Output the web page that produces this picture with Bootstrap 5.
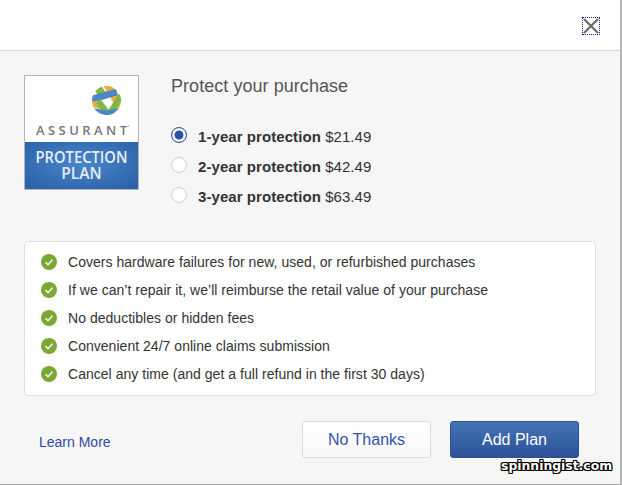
<!DOCTYPE html>
<html lang="en">
  <head>
    <meta charset="utf-8" />
    <meta name="viewport" content="width=device-width, initial-scale=1" />
    <title>Protect your purchase</title>
    <link href="https://cdn.jsdelivr.net/npm/bootstrap@5.3.3/dist/css/bootstrap.min.css" rel="stylesheet" />
    <style>
      html, body { height: 100%; overflow: hidden; }
      body {
        font-family: "Liberation Sans", Arial, sans-serif;
        background: #f6f6f6;
        color: #333;
      }
      .dialog-shell {
        width: 622px;
        height: 485px;
        border-right: 2px solid #b5b5b5;
        border-bottom: 1px solid #a8a8a8;
        position: relative;
      }
      .dialog-top {
        height: 51px;
        background: #fff;
        border-bottom: 1px solid #d9d9d9;
        padding: 17px 20px 0 0;
      }
      .close-x {
        width: 18px;
        height: 18px;
        padding: 0;
        background: none;
        border: 1px dotted #0a1fb0;
        line-height: 0;
      }
      .dialog-main { padding: 24px 24px 0 24px; }
      .plan-logo {
        width: 115px;
        height: 115px;
        border: 1px solid #b4b4b4;
        flex: none;
        background: #fff;
      }
      .plan-col { margin-left: 32px; }
      .plan-title {
        font-size: 18px;
        line-height: 22px;
        color: #555;
        font-weight: 400;
        letter-spacing: .05px;
        margin: 0 0 25px;
      }
      .plan-row {
        height: 30px;
        font-size: 15px;
        letter-spacing: .07px;
        color: #333;
        margin: 0;
        cursor: pointer;
      }
      .plan-row strong { font-weight: 700; }
      .plan-radio {
        width: 16px;
        height: 16px;
        border-radius: 50%;
        border: 1px solid #cfcfcf;
        background: #fff;
        margin-right: 11px;
        margin-top: -4px;
        flex: none;
      }
      .plan-radio.on {
        border-color: #2d50a5;
        box-shadow: inset 0 0 0 2.5px #fff, inset 0 0 0 8px #2d50a5;
      }
      .benefit-box {
        margin-top: 29px;
        width: 572px;
        height: 155px;
        background: #fff;
        border: 1px solid #e0e0e0;
        border-radius: 4px;
        padding: 6px 0 0 16px;
      }
      .benefit-row {
        height: 28px;
        font-size: 14px;
        letter-spacing: .03px;
        color: #333;
      }
      .benefit-row svg { margin-right: 11px; flex: none; }
      .dialog-foot {
        margin-top: 25px;
        padding: 0 17px 0 15px;
        width: 572px;
      }
      .learn-link {
        color: #2d4aa0;
        font-size: 14px;
        text-decoration: none;
        padding-top: 5px;
      }
      .foot-btn {
        width: 129px;
        height: 37px;
        font-size: 16px;
        padding: 0;
        border-radius: 3px;
      }
      .btn-nope {
        background: linear-gradient(#fff, #f8f8f8);
        border: 1px solid #dcdcdc;
        color: #3353b0;
        margin-right: 19px;
      }
      .btn-add {
        background: linear-gradient(#4475b5, #2c5198);
        border: 1px solid #2c5198;
        color: #fff;
      }
      .watermark {
        position: absolute;
        left: 501px;
        top: 458px;
        font-family: "DejaVu Sans", sans-serif;
        font-weight: 700;
        font-size: 12.4px;
        line-height: 16px;
        color: #fff;
        text-shadow: 1px 0 #000, -1px 0 #000, 0 1px #000, 0 -1px #000, 1px 1px #000, -1px -1px #000, 1px -1px #000, -1px 1px #000;
      }
    </style>
  </head>
  <body>
    <div class="dialog-shell">
      <div class="dialog-top d-flex justify-content-end align-items-start">
        <button class="close-x" aria-label="Close">
          <svg width="16" height="16" viewBox="0 0 16 16"><path d="M1 1 15 15M15 1 1 15" stroke="#666" stroke-width="2" fill="none" /></svg>
        </button>
      </div>

      <div class="dialog-main">
        <div class="d-flex">
          <div class="plan-logo">
            <svg width="113" height="113" viewBox="0 0 113 113">
              <defs>
                <radialGradient id="planBlue" cx="0.5" cy="0.45" r="0.65">
                  <stop offset="0" stop-color="#4b86c9" />
                  <stop offset="1" stop-color="#2c63ab" />
                </radialGradient>
                <clipPath id="ballClip"><circle cx="81.5" cy="24.5" r="14.5" /></clipPath>
              </defs>
              <g clip-path="url(#ballClip)" fill="none">
                <!-- woven bands of the ball -->
                <path d="M70 8 80 22" stroke="#7fb648" stroke-width="8" />
                <path d="M82 8 96 32" stroke="#efab38" stroke-width="8" />
                <path d="M64 24 92 16" stroke="#4a86c8" stroke-width="7" />
                <path d="M65 27 78 31" stroke="#efab38" stroke-width="6" />
                <path d="M98 17 85 37" stroke="#7fb648" stroke-width="6" />
                <path d="M73 25 85 40" stroke="#7fb648" stroke-width="6" />
                <path d="M64 34 82 37 99 34" stroke="#4a86c8" stroke-width="5" />
              </g>
              <text x="11" y="59" font-family="Open Sans, sans-serif" font-size="13" font-weight="600" fill="#777" textLength="91">ASSURANT</text>
              <circle cx="103.5" cy="50" r="0.8" fill="#aaa" />
              <rect x="0" y="66" width="113" height="47" fill="url(#planBlue)" />
              <text x="56.5" y="87" text-anchor="middle" font-family="Open Sans, sans-serif" font-size="15.5" font-weight="600" fill="#e8eef7" textLength="92" lengthAdjust="spacingAndGlyphs">PROTECTION</text>
              <text x="56.5" y="103" text-anchor="middle" font-family="Open Sans, sans-serif" font-size="15.5" font-weight="600" fill="#e8eef7">PLAN</text>
            </svg>
          </div>
          <div class="plan-col">
            <h1 class="plan-title">Protect your purchase</h1>
            <label class="plan-row d-flex align-items-center"><span class="plan-radio on"></span><span><strong>1-year protection</strong> $21.49</span></label>
            <label class="plan-row d-flex align-items-center"><span class="plan-radio"></span><span><strong>2-year protection</strong> $42.49</span></label>
            <label class="plan-row d-flex align-items-center"><span class="plan-radio"></span><span><strong>3-year protection</strong> $63.49</span></label>
          </div>
        </div>

        <div class="benefit-box">
          <div class="benefit-row d-flex align-items-center"><svg width="16" height="16" viewBox="0 0 16 16"><circle cx="8" cy="8" r="8" fill="#7ba832" /><path d="M4.5 8.3 7 10.8 11.6 5.6" stroke="#fff" stroke-width="1.4" fill="none" /></svg>Covers hardware failures for new, used, or refurbished purchases</div>
          <div class="benefit-row d-flex align-items-center"><svg width="16" height="16" viewBox="0 0 16 16"><circle cx="8" cy="8" r="8" fill="#7ba832" /><path d="M4.5 8.3 7 10.8 11.6 5.6" stroke="#fff" stroke-width="1.4" fill="none" /></svg>If we can’t repair it, we’ll reimburse the retail value of your purchase</div>
          <div class="benefit-row d-flex align-items-center"><svg width="16" height="16" viewBox="0 0 16 16"><circle cx="8" cy="8" r="8" fill="#7ba832" /><path d="M4.5 8.3 7 10.8 11.6 5.6" stroke="#fff" stroke-width="1.4" fill="none" /></svg>No deductibles or hidden fees</div>
          <div class="benefit-row d-flex align-items-center"><svg width="16" height="16" viewBox="0 0 16 16"><circle cx="8" cy="8" r="8" fill="#7ba832" /><path d="M4.5 8.3 7 10.8 11.6 5.6" stroke="#fff" stroke-width="1.4" fill="none" /></svg>Convenient 24/7 online claims submission</div>
          <div class="benefit-row d-flex align-items-center"><svg width="16" height="16" viewBox="0 0 16 16"><circle cx="8" cy="8" r="8" fill="#7ba832" /><path d="M4.5 8.3 7 10.8 11.6 5.6" stroke="#fff" stroke-width="1.4" fill="none" /></svg>Cancel any time (and get a full refund in the first 30 days)</div>
        </div>

        <div class="dialog-foot d-flex align-items-center justify-content-between">
          <a href="#" class="learn-link">Learn More</a>
          <div class="d-flex">
            <button class="btn foot-btn btn-nope">No Thanks</button>
            <button class="btn foot-btn btn-add">Add Plan</button>
          </div>
        </div>
      </div>

      <div class="watermark">spinningist.com</div>
    </div>
    <script src="https://cdn.jsdelivr.net/npm/bootstrap@5.3.3/dist/js/bootstrap.bundle.min.js"></script>
  </body>
</html>
